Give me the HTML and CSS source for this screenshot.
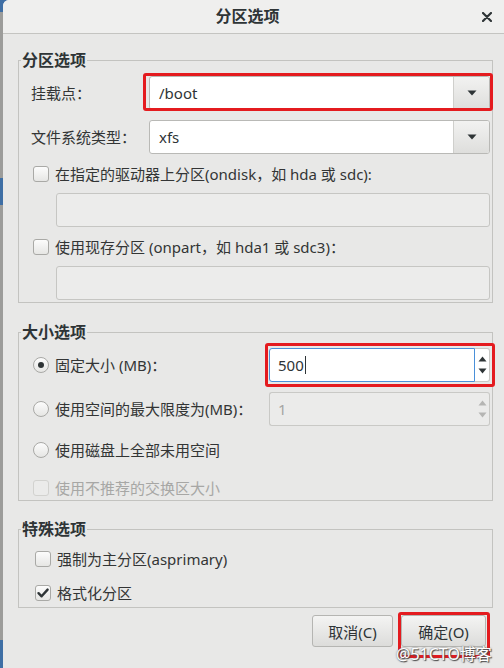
FILE: index.html
```html
<!DOCTYPE html>
<html lang="zh-CN">
<head>
<meta charset="utf-8">
<title>分区选项</title>
<link rel="stylesheet" href="styles.css">
</head>
<body>
<div class="screen">
  <div class="backdrop">
    <div class="bd bd-blue h12"></div>
    <div class="bd bd-gray h166"></div>
    <div class="bd bd-blue h27"></div>
    <div class="bd bd-gray grow"></div>
    <div class="bd bd-blue h28"></div>
  </div>
  <div class="dialog">
    <header class="titlebar">
      <span></span>
      <span class="title">分区选项</span>
      <span class="close"><svg width="10" height="10" viewBox="0 0 10 10"><path d="M1 1L9 9M9 1L1 9" stroke="#2e3436" stroke-width="2.2" stroke-linecap="round"/></svg></span>
    </header>
    <div class="content">
      <fieldset class="group g1">
        <legend>分区选项</legend>
        <div class="group-body b1">
          <div class="form-row">
            <span class="lbl">挂载点：</span>
            <div class="combo"><span class="combo-text">/boot</span><span class="combo-btn"><svg width="10" height="6" viewBox="0 0 10 6"><path d="M0.5 0.5H9.5L5 5.5Z" fill="#2e3436"/></svg></span></div>
          </div>
          <div class="form-row mt10">
            <span class="lbl">文件系统类型：</span>
            <div class="combo"><span class="combo-text">xfs</span><span class="combo-btn"><svg width="10" height="6" viewBox="0 0 10 6"><path d="M0.5 0.5H9.5L5 5.5Z" fill="#2e3436"/></svg></span></div>
          </div>
          <div class="check-row mt10"><span class="check"></span><span>在指定的驱动器上分区(ondisk，如 hda 或 sdc):</span></div>
          <div class="entry mt9"></div>
          <div class="check-row mt10"><span class="check"></span><span>使用现存分区 (onpart，如 hda1 或 sdc3)：</span></div>
          <div class="entry mt9"></div>
        </div>
      </fieldset>

      <fieldset class="group g2">
        <legend>大小选项</legend>
        <div class="group-body b2">
          <div class="size-row">
            <div class="radio-row"><span class="radio on"></span><span>固定大小 (MB)：</span></div>
            <div class="spin focus">
              <div class="spin-field"><span>500</span><span class="caret"></span></div>
              <div class="spin-btns">
                <svg width="9" height="6" viewBox="0 0 9 6"><path d="M0.5 5.5H8.5L4.5 0.5Z" fill="#2e3436"/></svg>
                <svg width="9" height="6" viewBox="0 0 9 6"><path d="M0.5 0.5H8.5L4.5 5.5Z" fill="#2e3436"/></svg>
              </div>
            </div>
          </div>
          <div class="size-row mt10">
            <div class="radio-row"><span class="radio"></span><span>使用空间的最大限度为(MB)：</span></div>
            <div class="spin disabled">
              <div class="spin-field"><span>1</span></div>
              <div class="spin-btns">
                <svg width="9" height="6" viewBox="0 0 9 6"><path d="M0.5 5.5H8.5L4.5 0.5Z" fill="#b5b5b3"/></svg>
                <svg width="9" height="6" viewBox="0 0 9 6"><path d="M0.5 0.5H8.5L4.5 5.5Z" fill="#b5b5b3"/></svg>
              </div>
            </div>
          </div>
          <div class="radio-row solo mt14"><span class="radio"></span><span>使用磁盘上全部未用空间</span></div>
          <div class="check-row dim mt18"><span class="check off"></span><span>使用不推荐的交换区大小</span></div>
        </div>
      </fieldset>

      <fieldset class="group g3">
        <legend>特殊选项</legend>
        <div class="group-body b3">
          <div class="check-row wide"><span class="check"></span><span>强制为主分区(asprimary)</span></div>
          <div class="check-row wide mt14"><span class="check"><svg width="14" height="14" viewBox="0 0 14 14"><path d="M2.5 7.2L5.6 10.3L11.6 3.6" fill="none" stroke="#2e3436" stroke-width="2.4" stroke-linecap="round" stroke-linejoin="round"/></svg></span><span>格式化分区</span></div>
        </div>
      </fieldset>

      <div class="buttons">
        <button class="btn cancel">取消(C)</button>
        <button class="btn ok">确定(O)</button>
      </div>
    </div>
  </div>

  <div class="mark m1"></div>
  <div class="mark m2"></div>
  <div class="mark m3"></div>
  <div class="watermark">@51CTO博客</div>
</div>
</body>
</html>
```
FILE: styles.css
```css
* { box-sizing: border-box; }
html, body { margin: 0; padding: 0; }
body {
  width: 504px;
  height: 668px;
  overflow: hidden;
  font-family: "Noto Sans", "Noto Sans CJK SC", sans-serif;
  font-size: 15px;
  color: #333535;
}
.screen {
  position: relative;
  display: flex;
  width: 504px;
  height: 668px;
  background: #3f6fa5;
}
.backdrop {
  width: 3px;
  display: flex;
  flex-direction: column;
}
.bd-blue { background: #3f6fa5; }
.bd-gray { background: #9c9c9a; }
.h12 { height: 12px; }
.h166 { height: 166px; }
.h27 { height: 27px; }
.h28 { height: 28px; }
.grow { flex: 1; }

.dialog {
  flex: 1;
  display: flex;
  flex-direction: column;
  background: #e8e8e7;
  border-top-left-radius: 6px;
  overflow: hidden;
}
.titlebar {
  height: 34px;
  flex: none;
  display: grid;
  grid-template-columns: 1fr auto 1fr;
  align-items: center;
  background: #efefee;
  border-bottom: 1px solid #c4c4c1;
  padding: 0 12px 1px 0;
}
.title {
  font-size: 16px;
  font-weight: bold;
  color: #2e3436;
  line-height: 20px;
}
.close {
  justify-self: end;
  display: flex;
  margin-top: 1px;
}

.content {
  padding: 16px 11px 0 15px;
}
.group {
  margin: 0;
  padding: 0;
  border: 1px solid #c3c3c0;
  min-width: 0;
}
.group legend {
  margin-left: 2px;
  padding: 0 1px;
  font-size: 16px;
  font-weight: bold;
  line-height: 20px;
  color: #2e3436;
}
.g2 { margin-top: 19px; }
.g3 { margin-top: 18px; }
.group-body { padding: 6px 2px 2px 12px; }
.b3 { padding: 10px 2px 4px 12px; }

.mt9 { margin-top: 9px; }
.mt10 { margin-top: 10px; }
.mt14 { margin-top: 14px; }
.mt18 { margin-top: 18px; }

.form-row {
  display: grid;
  grid-template-columns: 118px 1fr;
  align-items: center;
  height: 34px;
}
.lbl { line-height: 20px; }
.combo {
  display: flex;
  height: 34px;
  border: 1px solid #b9b9b6;
  border-radius: 3px;
  background: #fff;
  overflow: hidden;
}
.combo-text {
  flex: 1;
  padding-left: 9px;
  line-height: 32px;
  color: #2e3436;
}
.combo-btn {
  width: 36px;
  display: flex;
  align-items: center;
  justify-content: center;
  border-left: 1px solid #cfcfcc;
  background: linear-gradient(#f2f2f1, #dededc);
}

.check-row {
  display: flex;
  align-items: center;
  height: 20px;
  line-height: 20px;
  gap: 6px;
  padding-left: 2px;
}
.check-row.wide { padding-left: 4px; }
.check {
  width: 16px;
  height: 16px;
  flex: none;
  border: 1px solid #a9a9a6;
  border-radius: 3px;
  background: linear-gradient(#fcfcfc, #e6e6e4);
  display: flex;
  align-items: center;
  justify-content: center;
}
.check.off {
  border-color: #d2d2cf;
  background: #ebebea;
}
.dim { color: #a7a7a5; }

.entry {
  margin-left: 25px;
  height: 34px;
  border: 1px solid #c6c6c3;
  border-radius: 3px;
  background: #ececeb;
}

.size-row {
  display: grid;
  grid-template-columns: 238px 1fr;
  align-items: center;
  height: 34px;
}
.radio-row {
  display: flex;
  align-items: center;
  gap: 6px;
  padding-left: 2px;
  height: 20px;
  line-height: 20px;
}
.radio {
  width: 16px;
  height: 16px;
  flex: none;
  border: 1px solid #a9a9a6;
  border-radius: 50%;
  background: linear-gradient(#fcfcfc, #e6e6e4);
  display: flex;
  align-items: center;
  justify-content: center;
}
.radio.on::after {
  content: "";
  width: 6px;
  height: 6px;
  border-radius: 50%;
  background: #2e3436;
}

.spin {
  display: flex;
  height: 34px;
}
.spin-field {
  flex: 1;
  display: flex;
  align-items: center;
  padding-left: 8px;
  border-radius: 3px 0 0 3px;
}
.spin-btns {
  width: 15px;
  display: flex;
  flex-direction: column;
  align-items: center;
  justify-content: space-around;
  padding: 4px 0;
  border-radius: 0 3px 3px 0;
}
.spin.focus .spin-field {
  background: #fff;
  border: 1px solid #4a90d9;
  color: #2e3436;
}
.spin.focus .spin-btns {
  background: #fff;
  border: 1px solid #c9c9c6;
  border-left: 0;
}
.caret {
  width: 1px;
  height: 18px;
  background: #2e3436;
  margin-left: 1px;
}
.spin.disabled .spin-field {
  background: #ebebea;
  border: 1px solid #c9c9c6;
  border-right: 0;
  color: #a5a5a3;
}
.spin.disabled .spin-btns {
  background: #ebebea;
  border: 1px solid #c9c9c6;
  border-left: 0;
}

.buttons {
  display: flex;
  justify-content: flex-end;
  gap: 8px;
  margin-top: 7px;
  padding-right: 7px;
}
.btn {
  height: 32px;
  font: inherit;
  font-size: 15px;
  color: #2e3436;
  border: 1px solid #b5b5b2;
  border-radius: 3px;
  background: linear-gradient(#f4f4f3, #dcdcda);
  padding: 0;
}
.cancel { width: 81px; }
.ok { width: 85px; }

.mark {
  position: absolute;
  border: 3px solid #e41b1f;
  border-radius: 3px;
}
.m1 { left: 143px; top: 73px; width: 350px; height: 38px; }
.m2 { left: 265px; top: 343px; width: 230px; height: 44px; }
.m3 { left: 398px; top: 612px; width: 92px; height: 46px; }
.watermark {
  position: absolute;
  left: 396px;
  top: 643px;
  font-size: 16px;
  line-height: 22px;
  color: #ffffff;
  text-shadow: 0 0 2px #555, 1px 1px 1px #444;
  font-family: "Noto Sans", "Noto Sans CJK SC", sans-serif;
}
```
